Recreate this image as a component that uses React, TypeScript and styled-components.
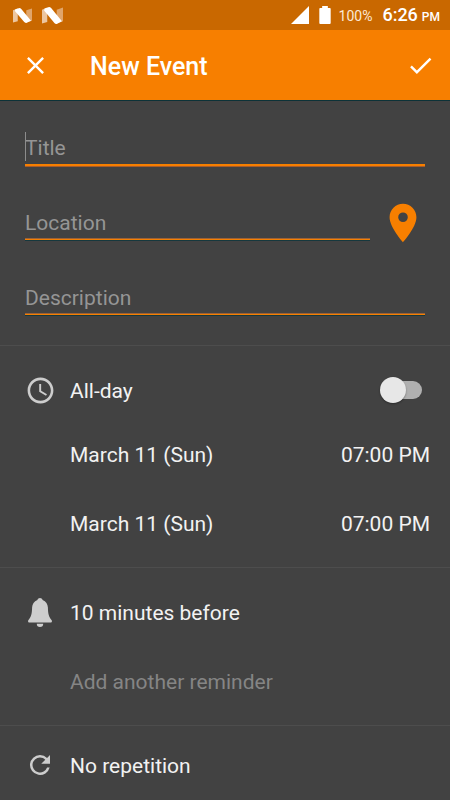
import React, { useState } from "react";
import styled, { createGlobalStyle } from "styled-components";

const accent = "#f77f00";

const GlobalStyle = createGlobalStyle`
  *, *::before, *::after { box-sizing: border-box; }
  body {
    margin: 0;
    background: #424242;
    color: #f2f2f2;
    font-family: Roboto, sans-serif;
  }
  button, input { font: inherit; color: inherit; }
`;

const Page = styled.div`
  display: flex;
  flex-direction: column;
  min-height: 100vh;
  background: #424242;
`;

const StatusBar = styled.div`
  display: flex;
  align-items: center;
  justify-content: space-between;
  height: 30px;
  padding: 0 10px 0 13px;
  background: #c96800;
  color: #fff;
`;

const StatusGroup = styled.div`
  display: flex;
  align-items: center;
  gap: 10px;
`;

const BatteryLevel = styled.span`
  margin-left: -2px;
  padding-top: 1px;
  font-size: 14px;
  line-height: 20px;
  color: #fbe9d6;
`;

const Clock = styled.span`
  padding-top: 2px;
  font-size: 18px;
  font-weight: 500;
  line-height: 20px;
  white-space: nowrap;
`;

const Meridiem = styled.span`
  margin-left: 4px;
  font-size: 12px;
`;

const Toolbar = styled.header`
  display: flex;
  align-items: center;
  height: 70px;
  padding: 0 10px;
  background: ${accent};
  box-shadow: 0 1px 0 #0c3238;
  color: #fff;
`;

const ToolbarTitle = styled.h1`
  flex: 1;
  margin: 0 0 0 30px;
  padding-top: 4px;
  font-size: 25px;
  font-weight: 500;
  line-height: 32px;
`;

const IconButton = styled.button<{ $width: number }>`
  display: flex;
  align-items: center;
  justify-content: center;
  width: ${(p) => p.$width}px;
  height: 50px;
  flex: none;
  padding: 0;
  border: 0;
  background: none;
  color: inherit;
  cursor: pointer;
`;

const Form = styled.form`
  display: flex;
  flex-direction: column;
`;

const Details = styled.section`
  display: flex;
  flex-direction: column;
  padding: 10px 25px;
  border-bottom: 1px solid #4d4d4d;
`;

const FieldRow = styled.div`
  display: flex;
  align-items: center;
  height: 75px;
`;

const Field = styled.div`
  position: relative;
  flex: 1;
  min-width: 0;
`;

const TextInput = styled.input<{ $active?: boolean }>`
  display: block;
  width: 100%;
  height: ${(p) => (p.$active ? 36 : 34)}px;
  padding: 2px 0 0;
  border: 0;
  border-bottom: ${(p) => (p.$active ? 2 : 1)}px solid ${accent};
  border-radius: 0;
  outline: none;
  background: none;
  box-shadow: ${(p) =>
    p.$active
      ? "0 1px 0 #a85c2a"
      : "0 1px 0 #16383e, inset 0 -1px 0 #9a6238"};
  font-size: 21px;
  &::placeholder { color: #959595; opacity: 1; }
`;

const Caret = styled.span`
  position: absolute;
  left: 0;
  top: 2px;
  width: 1px;
  height: 29px;
  background: #8c8c8c;
`;

const PinButton = styled(IconButton)`
  margin: 0 -5px 0 5px;
  color: ${accent};
`;

const Section = styled.section`
  display: flex;
  flex-direction: column;
  padding: 12px 20px;
  border-bottom: 1px solid #4d4d4d;
  &:last-child { border-bottom: 0; padding-bottom: 4px; }
`;

const Rows = styled.div`
  display: flex;
  flex-direction: column;
  gap: 5px;
`;

const Row = styled.div<{ $short?: boolean }>`
  display: flex;
  align-items: center;
  height: ${(p) => (p.$short ? 54 : 64)}px;
`;

const IconSlot = styled.span`
  display: flex;
  align-items: center;
  justify-content: center;
  width: 40px;
  flex: none;
  margin-right: 10px;
  color: #cdcdcd;
`;

const RowButton = styled.button<{ $muted?: boolean; $indent?: boolean; $grow?: boolean }>`
  flex: ${(p) => (p.$grow ? 1 : "none")};
  align-self: stretch;
  margin-left: ${(p) => (p.$indent ? 50 : 0)}px;
  padding: 2px 0 0;
  border: 0;
  background: none;
  color: ${(p) => (p.$muted ? "#858585" : "#f2f2f2")};
  font-size: 21px;
  line-height: 28px;
  text-align: left;
  white-space: nowrap;
  cursor: pointer;
`;

const SwitchLabel = styled.label`
  flex: 1;
  padding-top: 2px;
  font-size: 21px;
  line-height: 28px;
`;

const Switch = styled.input`
  appearance: none;
  display: grid;
  align-items: center;
  width: 42px;
  height: 26px;
  flex: none;
  margin: 0 8px 0 0;
  cursor: pointer;
  &::before, &::after { content: ""; grid-area: 1 / 1; }
  &::before {
    width: 36px;
    height: 18px;
    margin-left: 6px;
    border-radius: 9px;
    background: #b0b0b0;
  }
  &::after {
    width: 26px;
    height: 26px;
    border-radius: 50%;
    background: #e7e7e7;
    box-shadow: 0 1px 2px rgba(0, 0, 0, 0.35);
  }
  &:checked::after { justify-self: end; background: ${accent}; }
`;

const NougatIcon = ({ width, height }: { width: number; height: number }) => (
  <svg
    width={width}
    height={height}
    viewBox="0 0 20 16"
    preserveAspectRatio="none"
    aria-hidden="true"
  >
    <path d="M0 2.500 5 .500v13.500L0 15.500z" fill="#ecc6a0" />
    <path d="m14 2.500 6-2v13l-6 2z" fill="#e0a56a" />
    <path d="M2.500 1.300 6 .200Q7.500-.200 8.700 1L19 13.500l-4.500 2.200q-1.500.600-2.700-.700L2 3.200z" fill="#fff" />
  </svg>
);

const SignalIcon = () => (
  <svg width="18" height="18" viewBox="0 0 18 18" fill="currentColor" aria-hidden="true">
    <path d="M18 0v18H0z" />
  </svg>
);

const BatteryIcon = () => (
  <svg width="12" height="18" viewBox="0 0 12 19" fill="currentColor" aria-hidden="true">
    <path d="M3 0h6v2h2q1 0 1 1v15q0 1-1 1H1q-1 0-1-1V3q0-1 1-1h2z" />
  </svg>
);

const Icon = ({ size, d }: { size: number; d: string }) => (
  <svg width={size} height={size} viewBox="0 0 24 24" fill="currentColor" aria-hidden="true">
    <path d={d} />
  </svg>
);

const icons = {
  close:
    "M19 6.41 17.59 5 12 10.59 6.41 5 5 6.41 10.59 12 5 17.59 6.41 19 12 13.41 17.59 19 19 17.59 13.41 12z",
  check: "M9 16.17 4.83 12l-1.42 1.41L9 19 21 7l-1.41-1.41z",
  place:
    "M12 2C8.13 2 5 5.13 5 9c0 5.25 7 13 7 13s7-7.75 7-13c0-3.87-3.13-7-7-7zm0 9.5a2.5 2.5 0 0 1 0-5 2.5 2.5 0 0 1 0 5z",
  schedule:
    "M11.99 2C6.47 2 2 6.48 2 12s4.47 10 9.99 10C17.52 22 22 17.52 22 12S17.52 2 11.99 2zM12 20c-4.42 0-8-3.58-8-8s3.58-8 8-8 8 3.58 8 8-3.58 8-8 8zm.5-13H11v6l5.25 3.15.75-1.23-4.5-2.67z",
  refresh:
    "M17.65 6.35A7.96 7.96 0 0 0 12 4a8 8 0 1 0 7.73 10h-2.08A6 6 0 1 1 12 6c1.66 0 3.14.69 4.22 1.78L13 11h7V4z",
};

const BellIcon = () => (
  <svg width="24" height="29" viewBox="0 0 24 29" fill="currentColor" aria-hidden="true">
    <path d="M12 0c1.200 0 2.100.700 2.600 1.900C18 3.200 19.800 6 19.900 9.600c.1 6 .9 9.200 3.600 12.400.9 1.100.4 2.500-1 2.500h-21c-1.400 0-1.900-1.400-1-2.500C3.200 18.800 4 15.600 4.100 9.600 4.200 6 6 3.200 9.400 1.900 9.900.7 10.800 0 12 0z" />
    <path d="M8.800 25.800h6.400a3.200 3.200 0 0 1-6.400 0z" />
  </svg>
);

const dates = [
  { id: "start", date: "March 11 (Sun)", time: "07:00 PM" },
  { id: "end", date: "March 11 (Sun)", time: "07:00 PM" },
];

export default function App() {
  const [allDay, setAllDay] = useState(false);

  return (
    <Page>
      <GlobalStyle />
      <StatusBar>
        <StatusGroup>
          <NougatIcon width={19} height={15} />
          <NougatIcon width={21} height={17} />
        </StatusGroup>
        <StatusGroup>
          <SignalIcon />
          <BatteryIcon />
          <BatteryLevel>100%</BatteryLevel>
          <Clock>
            6:26<Meridiem>PM</Meridiem>
          </Clock>
        </StatusGroup>
      </StatusBar>
      <Toolbar>
        <IconButton type="button" $width={50} aria-label="Close">
          <Icon size={29} d={icons.close} />
        </IconButton>
        <ToolbarTitle>New Event</ToolbarTitle>
        <IconButton type="submit" form="event" $width={40} aria-label="Save">
          <Icon size={29} d={icons.check} />
        </IconButton>
      </Toolbar>
      <Form id="event" onSubmit={(e) => e.preventDefault()}>
        <Details>
          <FieldRow>
            <Field>
              <TextInput $active name="title" placeholder="Title" aria-label="Title" />
              <Caret />
            </Field>
          </FieldRow>
          <FieldRow>
            <Field>
              <TextInput name="location" placeholder="Location" aria-label="Location" />
            </Field>
            <PinButton type="button" $width={55} aria-label="Show on map">
              <Icon size={46} d={icons.place} />
            </PinButton>
          </FieldRow>
          <FieldRow>
            <Field>
              <TextInput name="description" placeholder="Description" aria-label="Description" />
            </Field>
          </FieldRow>
        </Details>
        <Section>
          <Row>
            <IconSlot>
              <Icon size={31} d={icons.schedule} />
            </IconSlot>
            <SwitchLabel htmlFor="all-day">All-day</SwitchLabel>
            <Switch
              id="all-day"
              type="checkbox"
              role="switch"
              checked={allDay}
              onChange={(e) => setAllDay(e.target.checked)}
            />
          </Row>
          <Rows>
            {dates.map((d) => (
              <Row key={d.id}>
                <RowButton type="button" $indent $grow>
                  {d.date}
                </RowButton>
                <RowButton type="button">{d.time}</RowButton>
              </Row>
            ))}
          </Rows>
        </Section>
        <Section>
          <Rows>
            <Row>
              <IconSlot>
                <BellIcon />
              </IconSlot>
              <RowButton type="button" $grow>
                10 minutes before
              </RowButton>
            </Row>
            <Row>
              <RowButton type="button" $indent $grow $muted>
                Add another reminder
              </RowButton>
            </Row>
          </Rows>
        </Section>
        <Section>
          <Row $short>
            <IconSlot>
              <Icon size={30} d={icons.refresh} />
            </IconSlot>
            <RowButton type="button" $grow>
              No repetition
            </RowButton>
          </Row>
        </Section>
      </Form>
    </Page>
  );
}
